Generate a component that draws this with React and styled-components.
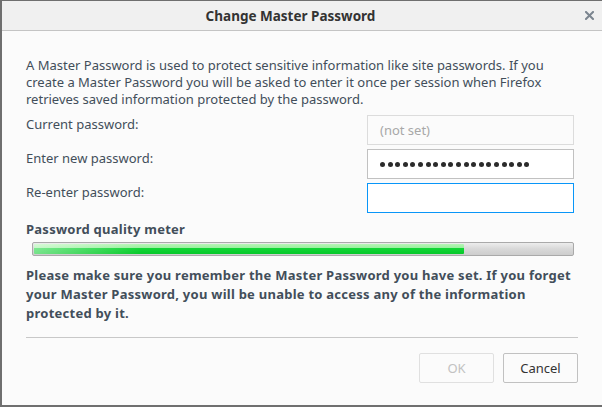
import React from 'react';
import styled, { createGlobalStyle } from 'styled-components';

const Global = createGlobalStyle`
  html, body {
    margin: 0;
    padding: 0;
    background: #fbfbfb;
  }
  body {
    font-family: 'Noto Sans', 'Open Sans', sans-serif;
  }
`;

const Dialog = styled.div`
  box-sizing: border-box;
  width: 602px;
  height: 407px;
  display: flex;
  flex-direction: column;
  background: #fbfbfb;
  border-left: 2px solid #6f6f6f;
  border-top: 1px solid #6f6f6f;
  border-bottom: 2px solid #6f6f6f;
  color: #424e5a;
`;

const Header = styled.div`
  display: flex;
  align-items: center;
  height: 29px;
  background: #f0f0f0;
  border-bottom: 1px solid #c4c4c4;
`;

const Title = styled.div`
  flex: 1;
  text-align: center;
  font-size: 13.5px;
  font-weight: 700;
  color: #333;
`;

const Close = styled.div`
  width: 23px;
  display: flex;
  align-items: center;
  padding-left: 6px;
  box-sizing: border-box;
`;

const Body = styled.div`
  flex: 1;
  display: flex;
  flex-direction: column;
  padding: 26px 24px 0 24px;
`;

const Intro = styled.p`
  margin: 0 0 7px;
  font-size: 13px;
  line-height: 17px;
`;

const Form = styled.div`
  display: flex;
  flex-direction: column;
  gap: 4px;
`;

const Row = styled.div`
  display: flex;
  justify-content: space-between;
  align-items: flex-start;
`;

const Label = styled.span`
  font-size: 13px;
  line-height: 17px;
  padding-top: 1px;
`;

const Field = styled.div`
  box-sizing: border-box;
  width: 207px;
  height: 30px;
  margin-right: 4px;
  display: flex;
  align-items: center;
  padding-left: 12px;
  border: 1px solid ${(p) => (p.$focused ? '#0996f8' : p.$disabled ? '#dcdcdc' : '#c1c1c1')};
  background: ${(p) => (p.$disabled ? '#fbfbfb' : '#fff')};
  color: #a8a8a8;
  font-size: 13px;
`;

const Dots = styled.div`
  display: flex;
  gap: 2.6px;
  padding-top: 1px;
`;

const Dot = styled.span`
  width: 5px;
  height: 5px;
  border-radius: 50%;
  background: #2b2b2b;
`;

const MeterLabel = styled.div`
  margin-top: 8px;
  font-size: 13px;
  line-height: 17px;
  font-weight: 700;
  letter-spacing: 0.25px;
`;

const Meter = styled.div`
  box-sizing: border-box;
  height: 14px;
  margin: 4px 4px 0 6px;
  border: 1px solid #a9a9a9;
  border-radius: 2px;
  padding: 1px;
  background: linear-gradient(#ededed, #d8d8d8 50%, #cdcdcd);
  display: flex;
`;

const Fill = styled.div`
  height: 100%;
  border-radius: 1px;
  background:
    linear-gradient(90deg, rgba(255, 255, 255, 0.45), rgba(255, 255, 255, 0) 25%),
    linear-gradient(#b6f5b6, #9cf0a0 35%, #12d535 45%, #06c82a);
`;

const Warning = styled.p`
  margin: 10px 0 0;
  font-size: 13px;
  line-height: 19px;
  font-weight: 700;
  letter-spacing: 0.25px;
`;

const Separator = styled.hr`
  margin: 14px 0 0 0;
  border: 0;
  border-top: 1px solid #c8c8c8;
`;

const Buttons = styled.div`
  display: flex;
  justify-content: flex-end;
  gap: 9px;
  margin-top: 15px;
`;

const Button = styled.button`
  box-sizing: border-box;
  width: ${(p) => p.$w}px;
  height: 30px;
  font-family: inherit;
  font-size: 13px;
  background: #fbfbfb;
  border: 1px solid ${(p) => (p.disabled ? '#e0e0e0' : '#c1c1c1')};
  border-radius: 2px;
  color: ${(p) => (p.disabled ? '#c2c2c2' : '#333')};
  padding: 0;
`;

const CloseIcon = () => (
  <svg width="9" height="9" viewBox="0 0 9 9">
    <path d="M1 1 L8 8 M8 1 L1 8" stroke="#7b858f" strokeWidth="2" strokeLinecap="square" />
  </svg>
);

export default function App() {
  return (
    <>
      <Global />
      <Dialog>
        <Header>
          <Title>Change Master Password</Title>
          <Close>
            <CloseIcon />
          </Close>
        </Header>
        <Body>
          <Intro>
            A Master Password is used to protect sensitive information like site passwords. If you
            create a Master Password you will be asked to enter it once per session when Firefox
            retrieves saved information protected by the password.
          </Intro>
          <Form>
            <Row>
              <Label>Current password:</Label>
              <Field $disabled>(not set)</Field>
            </Row>
            <Row>
              <Label>Enter new password:</Label>
              <Field>
                <Dots>
                  {Array.from({ length: 20 }, (_, i) => (
                    <Dot key={i} />
                  ))}
                </Dots>
              </Field>
            </Row>
            <Row>
              <Label>Re-enter password:</Label>
              <Field $focused />
            </Row>
          </Form>
          <MeterLabel>Password quality meter</MeterLabel>
          <Meter>
            <Fill style={{ width: '80%' }} />
          </Meter>
          <Warning>
            Please make sure you remember the Master Password you have set. If you forget your
            Master Password, you will be unable to access any of the information protected by it.
          </Warning>
          <Separator />
          <Buttons>
            <Button $w={75} disabled>
              OK
            </Button>
            <Button $w={75}>Cancel</Button>
          </Buttons>
        </Body>
      </Dialog>
    </>
  );
}
